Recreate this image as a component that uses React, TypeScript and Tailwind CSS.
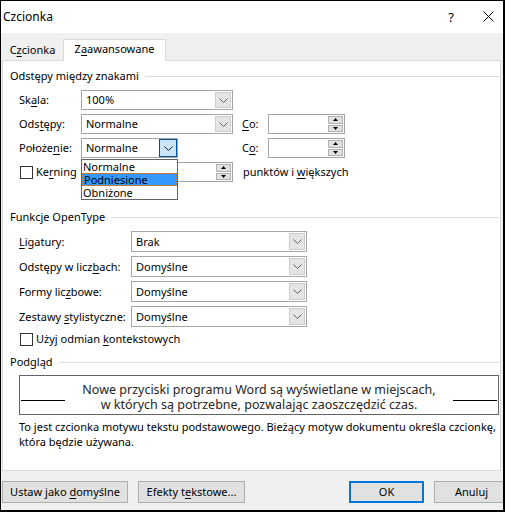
import React from "react";

const font = { fontFamily: '"Noto Sans", "Open Sans", sans-serif' };

function U({ children }: { children: React.ReactNode }) {
  return <span className="underline underline-offset-[2px] decoration-1">{children}</span>;
}

function Chevron({ color = "#606060" }: { color?: string }) {
  return (
    <svg width="9" height="5" viewBox="0 0 9 5" className="block">
      <polyline points="0.5,0.5 4.5,4.5 8.5,0.5" fill="none" stroke={color} strokeWidth="1" />
    </svg>
  );
}

function Select({ value, w, h = 20, active = false }: { value: string; w: number; h?: number; active?: boolean }) {
  return (
    <div
      className="flex items-stretch border border-[#a6a6a6] bg-white"
      style={{ width: w, height: h }}
    >
      <div className="flex-1 flex items-center pl-[4px] text-black">{value}</div>
      {active ? (
        <div className="w-[18px] flex items-center justify-center bg-[#cce4f7] border border-[#005499]">
          <Chevron color="#1e1e1e" />
        </div>
      ) : (
        <div className="w-[16px] m-[1px] flex items-center justify-center bg-[#e5e5e5] border border-[#cccccc]">
          <Chevron />
        </div>
      )}
    </div>
  );
}

function Spin({ w }: { w: number }) {
  return (
    <div className="flex items-stretch border border-[#a6a6a6] bg-white h-[20px]" style={{ width: w }}>
      <div className="flex-1" />
      <div className="w-[15px] my-[1px] mr-[1px] flex flex-col gap-[1px]">
        <div className="flex-1 flex items-center justify-center bg-[#e1e1e1] border border-[#b0b0b0]">
          <svg width="5" height="3" viewBox="0 0 5 3"><polygon points="2.5,0 5,3 0,3" fill="#000" /></svg>
        </div>
        <div className="flex-1 flex items-center justify-center bg-[#e1e1e1] border border-[#b0b0b0]">
          <svg width="5" height="3" viewBox="0 0 5 3"><polygon points="0,0 5,0 2.5,3" fill="#000" /></svg>
        </div>
      </div>
    </div>
  );
}

function GroupHeader({ title }: { title: string }) {
  return (
    <div className="flex items-center h-[16px] pl-[7px] pr-[1px]">
      <span>{title}</span>
      <div className="flex-1 h-px bg-[#dcdcdc] ml-[6px]" />
    </div>
  );
}

function Checkbox() {
  return <div className="w-[13px] h-[13px] shrink-0 border border-[#333333] bg-white" />;
}

function Button({ children, w, primary = false }: { children: React.ReactNode; w: number; primary?: boolean }) {
  return (
    <div
      className={
        "h-[22px] shrink-0 flex items-center justify-center bg-[#e1e1e1] " +
        (primary ? "border-2 border-[#0078d7]" : "border border-[#adadad]")
      }
      style={{ width: w }}
    >
      {children}
    </div>
  );
}

export default function App() {
  return (
    <div
      className="w-[505px] h-[512px] bg-black pt-[1px] pl-[1px] pr-[2px] pb-[2px] text-[11px] text-black leading-[16px]"
      style={font}
    >
      <div className="w-full h-full bg-[#f0f0f0] flex flex-col overflow-hidden">
        {/* Title bar */}
        <div className="h-[32px] shrink-0 bg-white flex items-center pl-[2px] pb-[1px]">
          <span className="flex-1 text-[12px]">Czcionka</span>
          <span className="mr-[29px] text-[13px]">?</span>
          <svg width="11" height="11" viewBox="0 0 11 11" className="mr-[9px]">
            <line x1="0.5" y1="0.5" x2="10.5" y2="10.5" stroke="#000" strokeWidth="1" />
            <line x1="10.5" y1="0.5" x2="0.5" y2="10.5" stroke="#000" strokeWidth="1" />
          </svg>
        </div>

        {/* Tabs */}
        <div className="h-[27px] shrink-0 flex items-end pl-[1px]">
          <div className="w-[61px] h-[20px] flex items-center justify-center pb-[1px]">
            <span>C<U>z</U>cionka</span>
          </div>
          <div className="w-[103px] h-[22px] -mb-px relative z-10 bg-white border border-b-0 border-[#d9d9d9] flex items-center justify-center pb-[3px]">
            <span>Z<U>a</U>awansowane</span>
          </div>
        </div>

        {/* Panel */}
        <div className="ml-[1px] w-[499px] h-[411px] shrink-0 bg-white border border-[#d9d9d9] pt-[7px] flex flex-col">
          <GroupHeader title="Odstępy między znakami" />

          <div className="mt-[6px] flex items-center h-[20px] pl-[16px]">
            <span className="w-[62px]">Sk<U>a</U>la:</span>
            <Select value="100%" w={152} />
          </div>

          <div className="mt-[4px] flex items-center h-[20px] pl-[16px]">
            <span className="w-[62px]">Ods<U>t</U>ępy:</span>
            <Select value="Normalne" w={152} />
            <span className="ml-[9px] w-[26px]"><U>C</U>o:</span>
            <Spin w={77} />
          </div>

          <div className="mt-[4px] flex items-center h-[20px] pl-[16px] relative z-20">
            <span className="w-[62px]">Położe<U>n</U>ie:</span>
            <div className="relative">
              <Select value="Normalne" w={97} active />
              <div className="absolute left-0 top-[21px] w-[97px] border border-[#646464] bg-white flex flex-col leading-[13px]">
                <div className="h-[13px] pl-[1px]">Normalne</div>
                <div className="h-[13px] pl-[1px] bg-[#3399ff] border border-dotted border-[#c87b2a] leading-[11px]">Podniesione</div>
                <div className="h-[13px] pl-[1px]">Obniżone</div>
              </div>
            </div>
            <span className="ml-[64px] w-[26px]">C<U>o</U>:</span>
            <Spin w={77} />
          </div>

          <div className="mt-[4px] flex items-center h-[20px] pl-[17px]">
            <Checkbox />
            <span className="ml-[3px] w-[46px] whitespace-nowrap">Ke<U>r</U>ning</span>
            <div className="w-[95px]" />
            <Spin w={56} />
            <span className="ml-[10px]">punktów i <U>w</U>iększych</span>
          </div>

          <div className="mt-[27px]">
            <GroupHeader title="Funkcje OpenType" />
          </div>

          {[
            [<><U>L</U>igatury:</>, "Brak"],
            [<>Odstępy w licz<U>b</U>ach:</>, "Domyślne"],
            [<>Formy lic<U>z</U>bowe:</>, "Domyślne"],
            [<>Zestawy <U>s</U>tylistyczne:</>, "Domyślne"],
          ].map(([label, value], i) => (
            <div key={i} className={(i === 0 ? "mt-[6px]" : "mt-[4px]") + " flex items-center h-[21px] pl-[16px]"}>
              <span className="w-[112px] whitespace-nowrap">{label}</span>
              <Select value={value as string} w={176} h={21} />
            </div>
          ))}

          <div className="mt-[4px] flex items-center h-[16px] pl-[17px]">
            <Checkbox />
            <span className="ml-[3px]">Użyj odmian <U>k</U>ontekstowych</span>
          </div>

          <div className="mt-[7px]">
            <GroupHeader title="Podgląd" />
          </div>

          <div className="mt-[5px] ml-[16px] w-[480px] h-[40px] border border-[#646464] flex items-end pb-[2px]">
            <div className="w-[44px] h-px bg-black mb-[11px] ml-[1px]" />
            <div className="flex-1 text-center text-[12.5px] leading-[15px] text-[#262626] whitespace-nowrap">
              Nowe przyciski programu Word są wyświetlane w miejscach,
              <br />w których są potrzebne, pozwalając zaoszczędzić czas.
            </div>
            <div className="w-[44px] h-px bg-black mb-[11px] mr-[1px]" />
          </div>

          <div className="mt-[4px] pl-[16px] pr-[2px] leading-[15px]">
            To jest czcionka motywu tekstu podstawowego. Bieżący motyw dokumentu określa czcionkę,
            <br />która będzie używana.
          </div>
        </div>

        {/* Footer */}
        <div className="mt-[10px] flex items-center pl-[1px] gap-[10px]">
          <Button w={126}>
            <span>Ustaw jako <U>d</U>omyślne</span>
          </Button>
          <Button w={107}>
            <span>Efekty t<U>e</U>kstowe...</span>
          </Button>
          <div className="w-[84px] shrink-0" />
          <Button w={75} primary>OK</Button>
          <Button w={75}>Anuluj</Button>
        </div>
      </div>
    </div>
  );
}
